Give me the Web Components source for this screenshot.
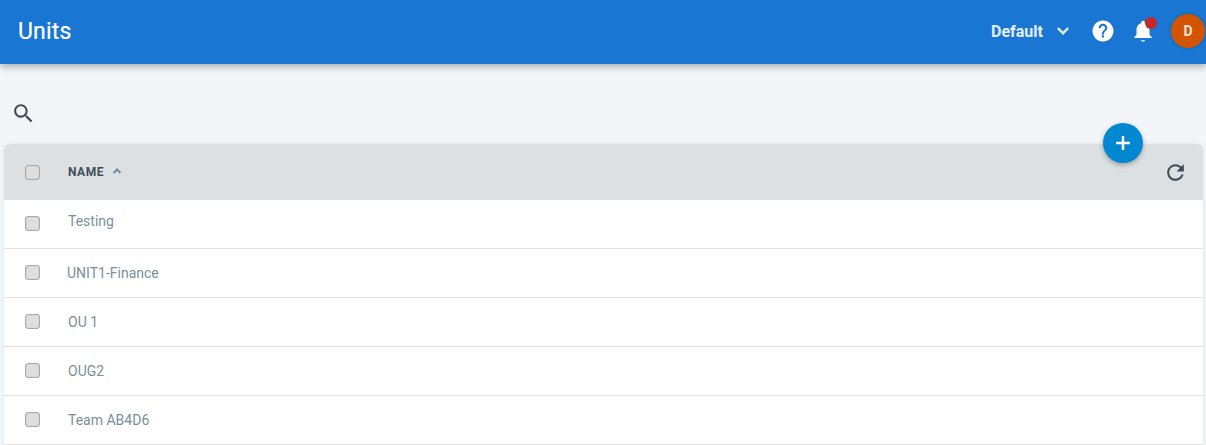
<!DOCTYPE html>
<html>
<head>
<meta charset="utf-8">
<title>Units</title>
<style>
    html, body { margin: 0; padding: 0; }
    body {
        width: 1206px;
        height: 445px;
        overflow: hidden;
        background-color: #f2f6f9;
        font-family: Roboto, "Liberation Sans", sans-serif;
    }
</style>
</head>
<body>
<app-bar title="Units" account="Default" initial="D"></app-bar>
<search-bar></search-bar>
<unit-table>
    <unit-row shift-y="-3">Testing</unit-row>
    <unit-row shift-x="-1">UNIT1-Finance</unit-row>
    <unit-row>OU 1</unit-row>
    <unit-row>OUG2</unit-row>
    <unit-row>Team AB4D6</unit-row>
</unit-table>

<script>
class AppBar extends HTMLElement {
    constructor() {
        super();
        this.attachShadow({ mode: 'open' });
    }

    connectedCallback() {
        this.shadowRoot.innerHTML = `
        <style>
            :host {
                display: flex;
                align-items: center;
                justify-content: space-between;
                height: 64px;
                background-color: #1976d2;
                box-shadow: 0 2px 8px rgba(0, 0, 0, 0.35);
                position: relative;
                z-index: 2;
                color: white;
            }
            .title { padding: 0 0 0 18px; font-size: 23px; letter-spacing: 0.2px; font-weight: 400; line-height: 68px; -webkit-text-stroke: 0.2px white; }
            .right { display: flex; align-items: center; margin-top: -2px; }
            .account { font-size: 16px; font-weight: 700; color: #e3eef9; width: 55px; }
            .chevron { display: block; margin: 0 0 0 10px; }
            .help { display: block; margin: 0 0 0 21px; }
            .bell-wrap { position: relative; width: 24px; height: 24px; margin-left: 16px; }
            .bell { display: block; }
            .dot {
                position: absolute; top: -2px; left: 14px;
                width: 12px; height: 12px; border-radius: 50%;
                background-color: #c62828;
            }
            .avatar {
                width: 34px; height: 34px; margin: 0 -1px 0 14px; border-radius: 50%;
                background-color: #d35400; border: 2px solid #1570c4; box-sizing: content-box;
                display: flex; align-items: center; justify-content: center;
                font-size: 14px; font-weight: 700; color: #f6e6da;
            }
        </style>
        <div class="title">${this.getAttribute('title')}</div>
        <div class="right">
            <span class="account">${this.getAttribute('account')}</span>
            <svg class="chevron" width="14" height="14" viewBox="0 0 14 14">
                <path d="M1.800 4 L7 9.200 L12.200 4" fill="none" stroke="#e3eef9" stroke-width="2.400"/>
            </svg>
            <svg class="help" width="24" height="24" viewBox="0 0 24 24">
                <path fill="#fff" d="M12 1.500C6.200 1.500 1.500 6.200 1.500 12S6.200 22.500 12 22.500 22.500 17.800 22.500 12 17.800 1.500 12 1.500zm1 17h-2.200v-2.200H13V18.500zm2.300-7.200l-1 1c-.8.8-1.300 1.500-1.300 3.200h-2.200V15c0-1.200.5-2.300 1.300-3.100l1.400-1.400c.4-.4.6-.9.6-1.500 0-1.200-1-2.200-2.100-2.200s-2.200 1-2.200 2.200H7.600C7.600 6.600 9.600 4.700 12 4.700s4.300 1.900 4.300 4.300c0 1-.4 1.800-1 2.300z"/>
            </svg>
            <div class="bell-wrap">
                <svg class="bell" width="24" height="24" viewBox="0 0 24 24">
                    <path fill="#fff" d="M12 22.500c1.200 0 2.200-.6 2.200-1.300H9.800c0 .7 1 1.300 2.200 1.300zM18.500 16v-5.300c0-3.200-1.700-5.800-4.700-6.500v-.7C13.800 2.500 13 1.700 12 1.700s-1.800.8-1.800 1.800v.7c-3 .7-4.700 3.300-4.700 6.500V16l-2.200 2.100v1h17.400v-1L18.500 16z"/>
                </svg>
                <span class="dot"></span>
            </div>
            <div class="avatar">${this.getAttribute('initial')}</div>
        </div>
        `;
    }
}

class SearchBar extends HTMLElement {
    constructor() {
        super();
        this.attachShadow({ mode: 'open' });
    }

    connectedCallback() {
        this.shadowRoot.innerHTML = `
        <style>
            :host { display: block; height: 80px; padding: 37px 0 0 11px; box-sizing: border-box; }
            svg { display: block; }
        </style>
        <svg width="25" height="25" viewBox="0 0 24 24">
            <path fill="#3f4d57" d="M15.500 14h-.79l-.28-.27C15.410 12.590 16 11.110 16 9.500 16 5.910 13.090 3 9.500 3S3 5.910 3 9.500 5.910 16 9.500 16c1.610 0 3.090-.59 4.230-1.570l.27.28v.79l5 4.990L20.490 19l-4.990-5zm-6 0C7.010 14 5 11.990 5 9.500S7.010 5 9.500 5 14 7.010 14 9.500 11.990 14 9.500 14z"/>
        </svg>
        `;
    }
}

class UnitCheck extends HTMLElement {
    constructor() {
        super();
        this.attachShadow({ mode: 'open' });
    }

    connectedCallback() {
        this.shadowRoot.innerHTML = `
        <style>
            :host {
                display: block;
                width: 15px;
                height: 15px;
                box-sizing: border-box;
                background-color: #dedede;
                border: 1px solid #a8a8a8;
                border-radius: 3px;
                box-shadow: inset 0 0 1px rgba(0, 0, 0, 0.25);
            }
        </style>
        `;
    }
}

class UnitTable extends HTMLElement {
    constructor() {
        super();
        this.attachShadow({ mode: 'open' });
    }

    connectedCallback() {
        this.shadowRoot.innerHTML = `
        <style>
            :host {
                display: block;
                position: relative;
                width: 1199px;
                margin-left: 4px;
                background-color: white;
                border-radius: 6px 6px 0 0;
                box-shadow: 0 0 5px rgba(0, 0, 0, 0.08);
            }
            .head {
                display: flex;
                align-items: center;
                height: 56px;
                padding: 0 15px 0 21px;
                background-color: #dce0e3;
                border-radius: 6px 6px 0 0;
            }
            .name {
                margin-left: 28px;
                font-size: 12px;
                font-weight: 700;
                letter-spacing: 0.5px;
                color: #414e58;
            }
            .sort { display: block; margin-left: 8px; margin-top: -3px; }
            .spacer { flex: 1; }
            .refresh { display: block; }
            .fab {
                position: absolute;
                top: -21px;
                left: 1099px;
                width: 40px;
                height: 40px;
                border-radius: 50%;
                background-color: #0288d1;
                box-shadow: 0 2px 5px rgba(0, 0, 0, 0.3);
                display: flex;
                align-items: center;
                justify-content: center;
            }
        </style>
        <div class="head">
            <unit-check></unit-check>
            <span class="name">NAME</span>
            <svg class="sort" width="10" height="8" viewBox="0 0 10 8">
                <path d="M1.500 6 L5 2.500 L8.500 6" fill="none" stroke="#7c8a94" stroke-width="2"/>
            </svg>
            <span class="spacer"></span>
            <svg class="refresh" width="25" height="25" viewBox="0 0 24 24">
                <path fill="#3f4d57" d="M17.650 6.350C16.200 4.900 14.210 4 12 4c-4.420 0-7.990 3.580-7.990 8s3.570 8 7.990 8c3.730 0 6.840-2.550 7.730-6h-2.080c-.82 2.330-3.040 4-5.650 4-3.310 0-6-2.690-6-6s2.690-6 6-6c1.660 0 3.140.69 4.220 1.780L13 11h7V4l-2.350 2.350z"/>
            </svg>
        </div>
        <div class="fab">
            <svg width="16" height="16" viewBox="0 0 16 16">
                <path d="M8 1 V15 M1 8 H15" stroke="#fff" stroke-width="2.400" fill="none"/>
            </svg>
        </div>
        <slot></slot>
        `;
    }
}

class UnitRow extends HTMLElement {
    constructor() {
        super();
        this.attachShadow({ mode: 'open' });
    }

    connectedCallback() {
        const shiftX = Number(this.getAttribute('shift-x') || 0);
        const shiftY = Number(this.getAttribute('shift-y') || 0);
        this.shadowRoot.innerHTML = `
        <style>
            :host {
                display: flex;
                align-items: center;
                height: 49px;
                box-sizing: border-box;
                padding-left: 21px;
                border-bottom: 1px solid #e2e2e2;
                background-color: white;
                font-size: 14px;
                color: #78909c;
            }
            unit-check { margin-top: -1px; }
            .label { margin-left: ${28 + shiftX}px; margin-top: ${shiftY * 2}px; }
        </style>
        <unit-check></unit-check>
        <span class="label"><slot></slot></span>
        `;
    }
}

customElements.define('app-bar', AppBar);
customElements.define('search-bar', SearchBar);
customElements.define('unit-check', UnitCheck);
customElements.define('unit-table', UnitTable);
customElements.define('unit-row', UnitRow);
</script>
</body>
</html>
